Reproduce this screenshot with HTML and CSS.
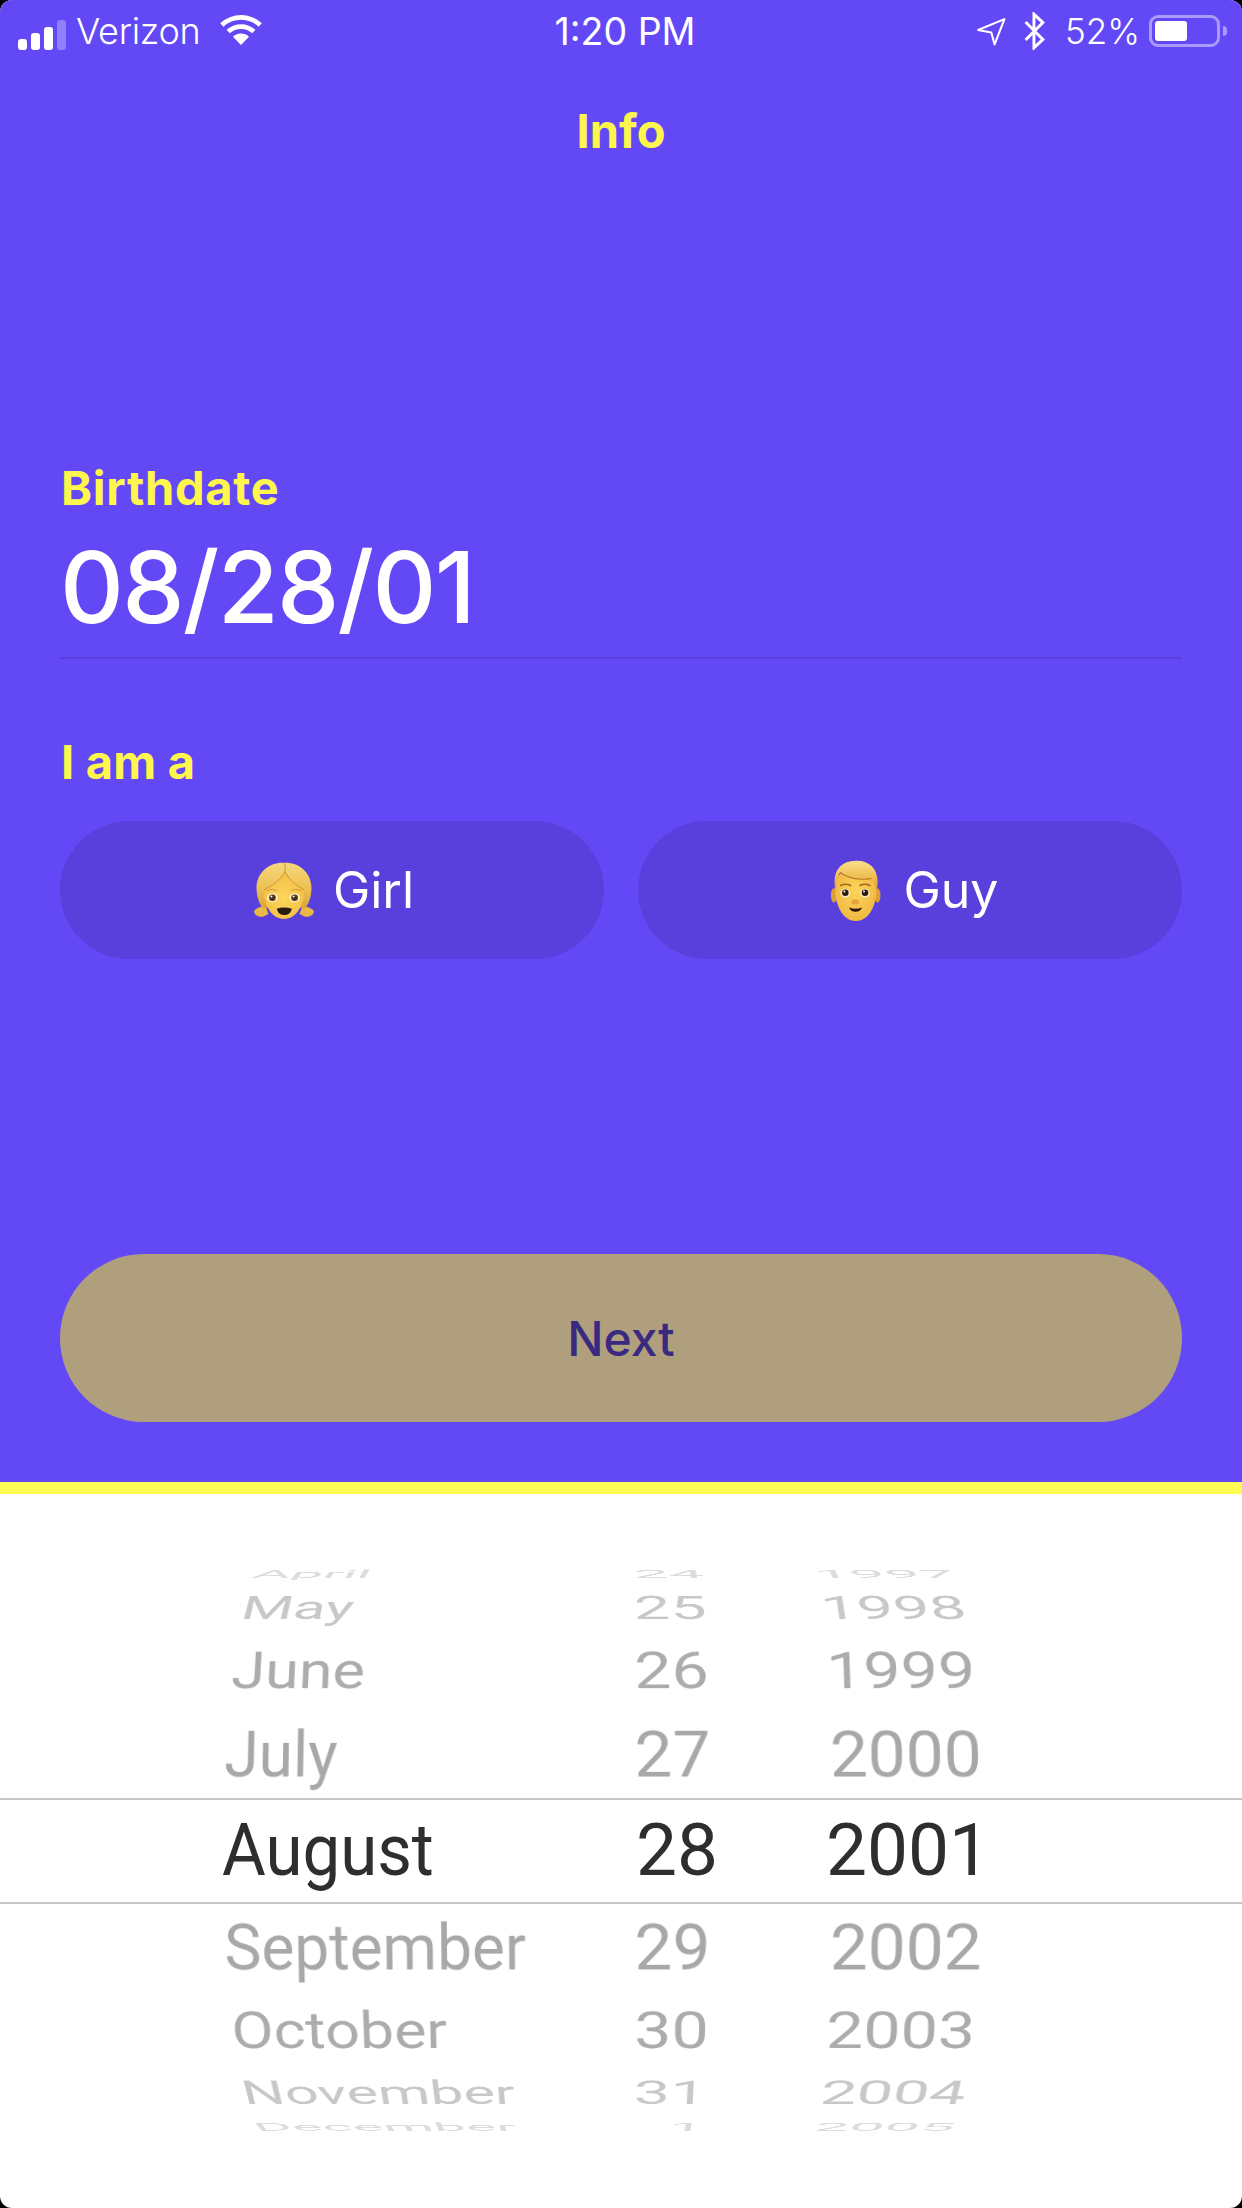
FILE: index.html
```html
<!DOCTYPE html>
<html lang="en">
<head>
<meta charset="utf-8">
<title>Info</title>
<link rel="stylesheet" href="styles.css">
</head>
<body>
<div class="screen">
  <section class="form">
    <header class="status">
      <div class="status-left">
        <svg class="signal" viewBox="0 0 48 30"><rect x="0" y="19" width="9" height="11" rx="3" fill="#fff"/><rect x="13" y="13" width="9" height="17" rx="3" fill="#fff"/><rect x="26" y="7" width="9" height="23" rx="3" fill="#fff"/><rect x="39" y="0" width="9" height="30" rx="3" fill="#8f7ffa"/></svg>
        <span class="carrier">Verizon</span>
        <svg class="wifi" viewBox="2 0 40 30"><path d="M22 30 14.500 22.200a11 11 0 0 1 15 0Z" fill="#fff"/><path d="M11.500 19a15.500 15.500 0 0 1 21 0l3-3.200a20 20 0 0 0-27 0Z" fill="#fff"/><path d="M5.500 12.800a24.500 24.500 0 0 1 33 0l3-3.300a29 29 0 0 0-39 0Z" fill="#fff"/></svg>
      </div>
      <div class="time">1:20 PM</div>
      <div class="status-right">
        <svg class="locate" viewBox="0 0 30 28"><path d="M2 12.500 27.500 2 18 26.500 14.800 15Z" fill="none" stroke="#fff" stroke-width="2" stroke-linejoin="round"/></svg>
        <svg class="bt" viewBox="1 0 20 36"><path d="M2.500 9.500 19 26 10.500 34V2L19 10 2.500 26.500" fill="none" stroke="#fff" stroke-width="2.800"/></svg>
        <span class="pct">52%</span>
        <div class="battery"><div class="battery-fill"></div></div>
        <div class="battery-nub"></div>
      </div>
    </header>
    <h1 class="title">Info</h1>
    <label class="label label-first">Birthdate</label>
    <div class="date">08/28/01</div>
    <label class="label label-second">I am a</label>
    <div class="chips">
      <button class="chip chip-girl">
        <svg class="emoji" viewBox="42 38 186 172">
          <defs>
            <linearGradient id="hairG" x1="0" y1="0" x2="0" y2="1"><stop offset="0" stop-color="#f6d77a"/><stop offset=".6" stop-color="#ecc052"/><stop offset="1" stop-color="#d9a53a"/></linearGradient>
            <radialGradient id="skinG" cx=".5" cy=".55" r=".6"><stop offset="0" stop-color="#fbd55a"/><stop offset="1" stop-color="#f3bd45"/></radialGradient>
          </defs>
          <path d="M78 168C58 176 42 182 45 190 50 206 72 208 88 194Z" fill="#e9b845"/>
          <path d="M192 168C212 176 228 182 225 190 220 206 198 208 182 194Z" fill="#e9b845"/>
          <path d="M136 40C90 38 52 70 52 116c0 24 6 44 18 60h130c12-16 18-36 18-60C218 70 180 38 136 40Z" fill="url(#hairG)"/>
          <path d="M138 66C125 92 100 108 74 122c0 50 26 88 61 88s61-38 61-88c-26-14-46-30-58-56Z" fill="url(#skinG)"/>
          <path d="M137 42c2 10 2 18 1 24-12 26-38 44-64 56M138 66c12 26 32 42 58 56" fill="none" stroke="#c79a36" stroke-width="3"/>
          <path d="M84 124q16-8 30 0M156 124q14-8 30 0" fill="none" stroke="#c99a3a" stroke-width="3" stroke-linecap="round"/>
          <ellipse cx="100" cy="146" rx="17" ry="14" fill="#f8ecc0"/><ellipse cx="167" cy="146" rx="17" ry="14" fill="#f8ecc0"/>
          <circle cx="100" cy="146" r="10" fill="#4a3212"/><circle cx="167" cy="146" r="10" fill="#4a3212"/>
          <circle cx="97" cy="142" r="3" fill="#fff"/><circle cx="164" cy="142" r="3" fill="#fff"/>
          <path d="M113 179q22-7 46 0-5 19-23 19-18 0-23-19Z" fill="#2b1a10"/>
        </svg>
        <span>Girl</span>
      </button>
      <button class="chip chip-guy">
        <svg class="emoji-guy" viewBox="46 30 154 186">
          <defs>
            <linearGradient id="hair2" x1="0" y1="0" x2="0" y2="1"><stop offset="0" stop-color="#fae08c"/><stop offset=".5" stop-color="#eebf52"/><stop offset="1" stop-color="#d89a30"/></linearGradient>
            <radialGradient id="skin2" cx=".5" cy=".45" r=".62"><stop offset="0" stop-color="#fbd55a"/><stop offset="1" stop-color="#f0b540"/></radialGradient>
          </defs>
          <ellipse cx="57" cy="138" rx="9" ry="22" fill="#dd9f38"/><ellipse cx="190" cy="138" rx="9" ry="22" fill="#dd9f38"/>
          <path d="M60 110C60 175 88 216 124 216s64-41 64-106c0-72-128-72-128 0Z" fill="url(#skin2)"/>
          <path d="M64 128C48 72 72 32 124 32c48-2 78 34 62 96-2-18-5-30-14-42-34 6-70 0-96-18-10 14-12 36-12 60Z" fill="url(#hair2)"/>
          <path d="M76 68c26 18 62 24 96 18" fill="none" stroke="#b97a24" stroke-width="3.500"/>
          <path d="M78 108q14-8 30 0M137 108q14-8 30 0" fill="none" stroke="#a8661c" stroke-width="5" stroke-linecap="round"/>
          <ellipse cx="92" cy="131" rx="15" ry="13" fill="#f8ecc0"/><ellipse cx="152" cy="131" rx="15" ry="13" fill="#f8ecc0"/>
          <circle cx="92" cy="130" r="10" fill="#2c1a0c"/><circle cx="152" cy="130" r="10" fill="#2c1a0c"/>
          <circle cx="89" cy="126" r="3" fill="#fff"/><circle cx="149" cy="126" r="3" fill="#fff"/>
          <ellipse cx="122" cy="158" rx="12" ry="8" fill="#e6a43c"/>
          <path d="M103 175q20 8 40 0-5 13-20 13-15 0-20-13Z" fill="#2c1509"/>
        </svg>
        <span>Guy</span>
      </button>
    </div>
    <button class="next">Next</button>
  </section>
  <section class="picker">
    <div class="wheel">
      <div class="band"></div>
      <div class="row rm4"><span class="month">April</span><span>24</span><span>1997</span></div>
      <div class="row rm3"><span class="month">May</span><span>25</span><span>1998</span></div>
      <div class="row rm2"><span class="month">June</span><span>26</span><span>1999</span></div>
      <div class="row rm1"><span class="month">July</span><span>27</span><span>2000</span></div>
      <div class="row r0"><span class="month">August</span><span>28</span><span>2001</span></div>
      <div class="row rp1"><span class="month">September</span><span>29</span><span>2002</span></div>
      <div class="row rp2"><span class="month">October</span><span>30</span><span>2003</span></div>
      <div class="row rp3"><span class="month">November</span><span>31</span><span>2004</span></div>
      <div class="row rp4"><span class="month">December</span><span>1</span><span>2005</span></div>
    </div>
  </section>
</div>
</body>
</html>
```
FILE: styles.css
```css
* { box-sizing: border-box; }
html, body { margin: 0; padding: 0; background: #000; }
body { width: 1242px; height: 2208px; overflow: hidden; font-family: Inter, "Liberation Sans", sans-serif; }
.screen { width: 1242px; height: 2208px; display: flex; flex-direction: column; background: #fff; border-radius: 12px; overflow: hidden; }
.form { height: 1482px; background: #6349f6; padding: 0 60px 60px; display: flex; flex-direction: column; }

.status { margin: 0 -60px; height: 62px; padding: 0 15px 0 18px; display: grid; grid-template-columns: 1fr auto 1fr; align-items: center; color: #fff; }
.status-left { display: flex; align-items: center; }
.signal { width: 48px; height: 30px; margin-top: 8px; }
.carrier { margin-left: 10px; font-size: 36px; font-weight: 300; letter-spacing: -0.3px; }
.wifi { width: 44px; height: 32px; margin-left: 19px; margin-top: -4px; }
.time { font-size: 37.500px; font-weight: 400; margin-left: 5px; }
.status-right { display: flex; align-items: center; justify-content: flex-end; }
.locate { width: 31px; height: 29px; }
.bt { width: 21px; height: 38px; margin-left: 17px; }
.pct { margin-left: 20px; font-size: 35px; font-weight: 300; }
.battery { width: 71px; height: 32px; margin-left: 9px; border: 3px solid #a99bfb; border-radius: 9px; padding: 3px; }
.battery-fill { width: 32px; height: 20px; background: #fff; border-radius: 3px; }
.battery-nub { width: 4px; height: 10px; margin-left: 3px; background: #a99bfb; border-radius: 0 4px 4px 0; }

.title { margin: 38px 0 0; height: 62px; line-height: 62px; text-align: center; color: #fff64d; font-size: 47px; font-weight: 700; }
.label { display: block; height: 56px; line-height: 56px; color: #fff64d; font-size: 47px; font-weight: 700; }
.label-first { margin-top: 298px; padding-left: 1px; letter-spacing: .7px; }
.date { margin-top: 9px; height: 134px; padding-top: 2px; line-height: 120px; color: #fff; font-size: 99px; font-weight: 500; letter-spacing: -1.700px; border-bottom: 2px solid #5940dc; }
.label-second { margin-top: 75px; padding-left: 1px; letter-spacing: .2px; }
.chips { margin-top: 31px; display: grid; grid-template-columns: 1fr 1fr; gap: 34px; }
.chip { height: 138px; border: 0; border-radius: 69px; background: #5940dc; color: #fff; font: 400 50px Inter, "Liberation Sans", sans-serif; display: flex; align-items: center; justify-content: center; gap: 18px; }
.chip-girl { padding-left: 9px; }
.chip-guy { gap: 23px; padding-left: 14px; }
.emoji { width: 62px; height: 57px; }
.emoji-guy { width: 51px; height: 61px; }
.next { margin-top: auto; height: 168px; border: 0; border-radius: 84px; background: #af9f7d; color: #392a80; font: 500 48px Inter, "Liberation Sans", sans-serif; }

.picker { flex: 1; border-top: 12px solid #fffd54; padding-top: 68px; }
.wheel { height: 576px; overflow: hidden; display: grid; align-items: center; }
.band { grid-area: 1 / 1; height: 106px; margin-top: 1px; border-top: 2px solid #c8c8c8; border-bottom: 2px solid #c8c8c8; }
.row { grid-area: 1 / 1; height: 104px; padding-left: 222px; display: grid; grid-template-columns: 400px 89px 273px; align-items: center; font-family: Roboto, "Liberation Sans", sans-serif; font-size: 68px; color: #a8a8a8; }
.row span:nth-child(2), .row span:nth-child(3) { text-align: right; }
.month { display: block; white-space: nowrap; transform: scaleX(.92); transform-origin: left center; }

.r0 { font-size: 73px; color: #2e2e2e; }
.r0 span:nth-child(2) { margin-right: -7px; }
.r0 span:nth-child(3) { margin-right: -6px; }
.rm1 { transform: translateY(-95px) scale(.994) perspective(7000px) rotateX(20deg); }
.rm2 { transform: translateY(-179px) scale(.976) perspective(6000px) rotateX(40deg); color: #acacac; }
.rm3 { transform: translateY(-242px) scale(.95) perspective(2650px) rotateX(60deg); color: #c8c8c8; }
.rm4 { transform: translateY(-276px) scale(.92) perspective(2650px) rotateX(80deg); color: #dcdcdc; }
.rp1 { transform: translateY(98px) scale(.994) perspective(7000px) rotateX(-20deg); }
.rp2 { transform: translateY(181px) scale(.976) perspective(6000px) rotateX(-40deg); color: #acacac; }
.rp3 { transform: translateY(243px) scale(.95) perspective(2650px) rotateX(-60deg); color: #c8c8c8; }
.rp4 { transform: translateY(277px) scale(.92) perspective(2650px) rotateX(-80deg); color: #dcdcdc; }
```
